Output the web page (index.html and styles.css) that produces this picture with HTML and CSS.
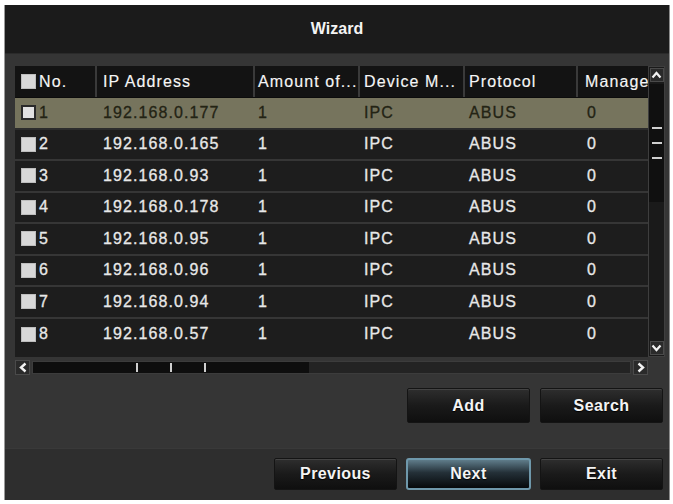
FILE: index.html
```html
<!DOCTYPE html>
<html lang="en">
<head>
  <meta charset="UTF-8">
  <meta name="viewport" content="width=device-width, initial-scale=1.0">
  <title>Wizard</title>
  <link rel="stylesheet" href="styles.css">
</head>
<body>
  <div class="window">
    <div class="title">Wizard</div>

    <div class="content">
      <div class="grid-wrap">
        <div class="table">
          <div class="row head">
            <div class="cell c1"><span class="check"></span>No.</div>
            <div class="cell c2">IP Address</div>
            <div class="cell c3">Amount of...</div>
            <div class="cell c4">Device M...</div>
            <div class="cell c5">Protocol</div>
            <div class="cell c6">Manage</div>
          </div>
          <div class="row selected">
            <div class="cell c1"><span class="check"></span>1</div>
            <div class="cell c2">192.168.0.177</div>
            <div class="cell c3">1</div>
            <div class="cell c4">IPC</div>
            <div class="cell c5">ABUS</div>
            <div class="cell c6">0</div>
          </div>
          <div class="row">
            <div class="cell c1"><span class="check"></span>2</div>
            <div class="cell c2">192.168.0.165</div>
            <div class="cell c3">1</div>
            <div class="cell c4">IPC</div>
            <div class="cell c5">ABUS</div>
            <div class="cell c6">0</div>
          </div>
          <div class="row">
            <div class="cell c1"><span class="check"></span>3</div>
            <div class="cell c2">192.168.0.93</div>
            <div class="cell c3">1</div>
            <div class="cell c4">IPC</div>
            <div class="cell c5">ABUS</div>
            <div class="cell c6">0</div>
          </div>
          <div class="row">
            <div class="cell c1"><span class="check"></span>4</div>
            <div class="cell c2">192.168.0.178</div>
            <div class="cell c3">1</div>
            <div class="cell c4">IPC</div>
            <div class="cell c5">ABUS</div>
            <div class="cell c6">0</div>
          </div>
          <div class="row">
            <div class="cell c1"><span class="check"></span>5</div>
            <div class="cell c2">192.168.0.95</div>
            <div class="cell c3">1</div>
            <div class="cell c4">IPC</div>
            <div class="cell c5">ABUS</div>
            <div class="cell c6">0</div>
          </div>
          <div class="row">
            <div class="cell c1"><span class="check"></span>6</div>
            <div class="cell c2">192.168.0.96</div>
            <div class="cell c3">1</div>
            <div class="cell c4">IPC</div>
            <div class="cell c5">ABUS</div>
            <div class="cell c6">0</div>
          </div>
          <div class="row">
            <div class="cell c1"><span class="check"></span>7</div>
            <div class="cell c2">192.168.0.94</div>
            <div class="cell c3">1</div>
            <div class="cell c4">IPC</div>
            <div class="cell c5">ABUS</div>
            <div class="cell c6">0</div>
          </div>
          <div class="row last">
            <div class="cell c1"><span class="check"></span>8</div>
            <div class="cell c2">192.168.0.57</div>
            <div class="cell c3">1</div>
            <div class="cell c4">IPC</div>
            <div class="cell c5">ABUS</div>
            <div class="cell c6">0</div>
          </div>
        </div>

        <div class="vscroll">
          <div class="arrow-box">
            <svg width="11" height="8" viewBox="0 0 11 8"><path d="M1.5 6.5 L5.5 2 L9.5 6.5" fill="none" stroke="#f2f2f2" stroke-width="2.2"/></svg>
          </div>
          <div class="vtrack">
            <div class="vthumb">
              <span class="grip"></span>
              <span class="grip"></span>
              <span class="grip"></span>
            </div>
          </div>
          <div class="arrow-box">
            <svg width="11" height="8" viewBox="0 0 11 8"><path d="M1.5 1.5 L5.5 6 L9.5 1.5" fill="none" stroke="#f2f2f2" stroke-width="2.2"/></svg>
          </div>
        </div>
      </div>

      <div class="hscroll">
        <div class="arrow-box side">
          <svg width="8" height="11" viewBox="0 0 8 11"><path d="M6.5 1.5 L2 5.5 L6.5 9.5" fill="none" stroke="#f2f2f2" stroke-width="2.4"/></svg>
        </div>
        <div class="htrack">
          <div class="hthumb">
            <span class="tick"></span>
            <span class="tick"></span>
            <span class="tick"></span>
          </div>
        </div>
        <div class="arrow-box side">
          <svg width="8" height="11" viewBox="0 0 8 11"><path d="M1.5 1.5 L6 5.5 L1.5 9.5" fill="none" stroke="#f2f2f2" stroke-width="2.4"/></svg>
        </div>
      </div>

      <div class="actions">
        <button class="btn">Add</button>
        <button class="btn">Search</button>
      </div>
    </div>

    <div class="footer">
      <button class="btn">Previous</button>
      <button class="btn primary">Next</button>
      <button class="btn">Exit</button>
    </div>
  </div>
</body>
</html>
```

FILE: styles.css
```css
body {
  margin: 0;
  background: #ffffff;
  font-family: "Liberation Sans", Arial, sans-serif;
}
.window {
  margin: 5px 0 0 4px;
  width: 664px;
  height: 495px;
  border-left: 1px solid #9a9a9a;
  border-right: 1px solid #8a8a8a;
  background: #353535;
  display: flex;
  flex-direction: column;
}
.title {
  height: 48px;
  line-height: 48px;
  background: #1b1b1b;
  color: #f4f4f4;
  text-align: center;
  font-weight: bold;
  font-size: 16px;
  border-bottom: 1px solid #2a2a2a;
}
.content {
  flex: 1;
  padding: 12px 4px 0 10px;
}
.grid-wrap {
  display: flex;
}
.table {
  width: 633px;
  background: #1d1d1d;
}
.row {
  display: grid;
  grid-template-columns: 82px 158px 105px 105px 113px 70px;
  height: 31.5px;
  box-sizing: border-box;
  border-bottom: 2px solid #363636;
  color: #e8e8e8;
  font-size: 16px;
  letter-spacing: 1.1px;
  -webkit-text-stroke: 0.3px;
}
.row.last {
  border-bottom: none;
}
.row.head {
  height: 32px;
  background: #131313;
  border-bottom: 1px solid #0c0c0c;
  color: #f6f6f6;
  -webkit-text-stroke: 0.15px;
}
.row.selected {
  background: #76745d;
  color: #232314;
  border-bottom: 2px solid #2c2c2c;
}
.cell {
  display: flex;
  align-items: center;
  white-space: nowrap;
  overflow: hidden;
}
.head .cell {
  border-right: 2px solid #3a3a3a;
}
.head .c6 {
  border-right: none;
}
.c1 {
  padding-left: 6px;
}
.c2 {
  padding-left: 6px;
}
.c3 {
  padding-left: 3px;
}
.c4, .c5 {
  padding-left: 4px;
}
.c6 {
  padding-left: 7px;
}
.row:not(.head) .c6 {
  padding-left: 9px;
}
.check {
  width: 15px;
  height: 15px;
  background: #d8d8d8;
  margin-right: 3px;
  box-sizing: border-box;
  box-shadow: inset 0 0 0 1px #bdbdbd;
}
.selected .check {
  background: #e2e2e2;
  border: 2px solid #2a2a2a;
  box-shadow: none;
}
.vscroll {
  width: 17px;
  height: 291px;
  background: #1a1a1a;
  border: 1px solid #3e3e3e;
  box-sizing: border-box;
  display: flex;
  flex-direction: column;
  align-items: center;
}
.arrow-box {
  width: 14px;
  height: 14px;
  background: #2a2a2a;
  border: 1px solid #4a4a4a;
  box-sizing: border-box;
  display: flex;
  align-items: center;
  justify-content: center;
  margin: 1px 0;
}
.vtrack {
  flex: 1;
  width: 100%;
  padding-top: 1px;
}
.vthumb {
  height: 118px;
  background: #101010;
  display: flex;
  flex-direction: column;
  align-items: center;
  justify-content: center;
  gap: 13px;
}
.grip {
  width: 10px;
  height: 2px;
  background: #d0d0d0;
}
.hscroll {
  margin-top: 3px;
  width: 633px;
  height: 15px;
  display: flex;
  align-items: center;
  gap: 2px;
}
.arrow-box.side {
  width: 15px;
  height: 15px;
  margin: 0;
}
.htrack {
  flex: 1;
  height: 13px;
  background: #232323;
  border: 1px solid #3c3c3c;
  box-sizing: border-box;
}
.hthumb {
  width: 276px;
  height: 100%;
  background: #0e0e0e;
  display: flex;
  justify-content: center;
  align-items: center;
  gap: 32px;
}
.tick {
  width: 2px;
  height: 9px;
  background: #cfcfcf;
}
.actions {
  display: flex;
  justify-content: flex-end;
  gap: 10px;
  margin-top: 13px;
  padding-right: 2px;
}
.btn {
  width: 123px;
  height: 35px;
  font-family: "Liberation Sans", Arial, sans-serif;
  font-size: 16px;
  font-weight: bold;
  letter-spacing: 0.4px;
  color: #f4f4f4;
  text-shadow: 0 1px 1px #000;
  background: linear-gradient(#2e2e2e, #1a1a1a 50%, #0f0f0f);
  border: 1px solid #141414;
  border-radius: 2px;
  box-shadow: inset 0 1px 0 #444444;
  cursor: pointer;
}
.footer {
  height: 52px;
  box-sizing: border-box;
  background: #2e2e2e;
  border-top: 1px solid #393939;
  display: flex;
  justify-content: flex-end;
  align-items: flex-start;
  gap: 9px;
  padding: 9px 6px 0 0;
}
.footer .btn {
  height: 32px;
}
.btn.primary {
  width: 125px;
  background: linear-gradient(#5f7c8a, #243038 45%, #06090b);
  border: 2px solid #6f98ab;
  border-radius: 3px;
  box-shadow: none;
}
```
